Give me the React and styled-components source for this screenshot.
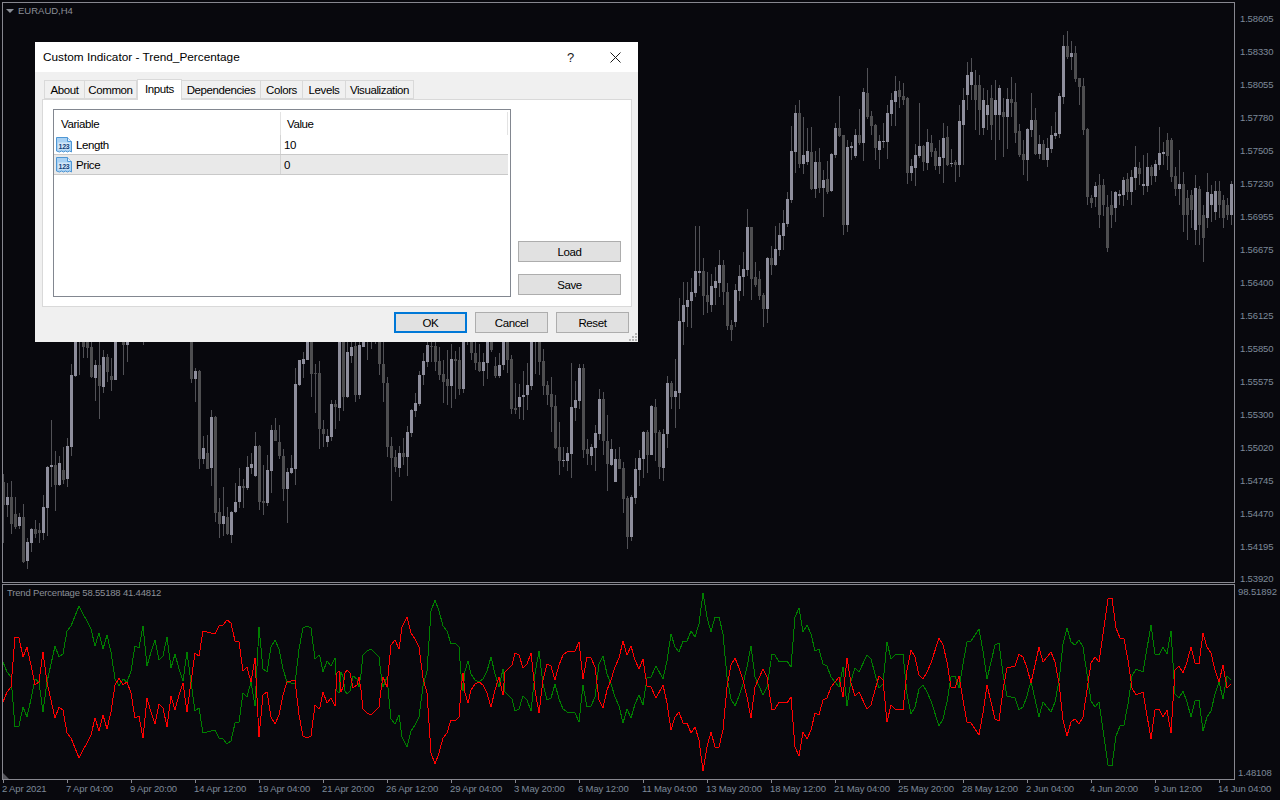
import React from 'react';
import styled, { createGlobalStyle } from 'styled-components';

// -------------------------------------------------------- Chart data (read off 3x crops, so origin + value / 3)
const candleBlocks = [
    { ox: 0, oy: 340, rows: [
        [10,402,425,495,610,0],[22,430,472,495,530,1],[34,422,472,552,582,0],[46,472,522,560,566,0],[58,518,531,558,568,1],
        [70,492,531,666,670,0],[82,595,606,662,686,1],[94,565,567,608,635,1],[106,541,568,582,594,0],[118,549,570,578,608,0],
        [130,465,501,578,600,1],[142,378,381,503,588,1],[154,240,375,381,440,1],[166,333,375,435,513,0],[178,348,369,435,437,1],
        [190,321,390,420,432,0],[202,294,318,417,441,1],[214,72,105,320,348,1],[226,-9,-9,108,110,1],[238,-9,-9,-3,105,0],
        [250,-9,-9,20,55,0],[262,-9,-9,24,55,0],[274,-9,20,110,115,0],[286,60,75,113,182,1],[298,-9,75,137,236,0],
        [310,30,51,140,158,1],[322,42,51,96,125,0],[334,55,108,120,152,0],[346,-9,-9,120,120,1],[370,-9,-9,15,105,0],
        [382,-9,-9,15,65,1],[430,-9,-9,-6,15,0],
        [574,-9,-9,117,130,0],[586,85,93,117,186,1],[598,90,93,357,387,0],[610,289,324,357,372,1],[622,285,339,387,387,0],
        [634,210,231,384,438,1],[646,228,231,519,546,0],[658,474,516,552,594,0],[670,441,528,552,588,1],[682,501,531,582,585,0],
        [694,513,516,585,609,1],[706,430,486,516,520,1],[718,384,438,486,504,1],[730,417,438,444,504,0],[742,348,381,444,450,1],
        [754,339,372,384,402,1],[766,276,318,408,411,1],[778,315,318,486,510,0],[790,375,483,489,525,0],[802,345,390,489,498,1],
        [814,255,270,393,459,1],[826,234,270,303,303,0],[838,255,306,348,357,0],[850,327,348,447,483,0],[862,384,396,447,549,1],
        [874,345,384,399,402,1],[886,84,132,387,435,1],[898,60,60,135,138,1],[910,36,57,72,114,1],[922,-9,-9,60,60,1],
        [934,-9,-9,102,171,0],[946,72,99,102,219,0],[958,63,99,267,327,0],
    ] },
    { ox: 300, oy: 340, rows: [
        [70,240,267,282,320,0],[82,268,288,306,320,1],[94,180,192,291,303,1],[106,180,192,201,267,0],[118,-9,-9,204,243,1],
        [130,-9,-9,171,213,0],[142,-9,36,171,173,1],[154,-9,21,48,69,1],[166,-9,18,165,186,0],[178,-9,15,165,177,1],
        [190,-9,-9,21,21,1],[202,-9,-9,-6,60,0],[214,-9,-9,-6,27,0],[226,-9,-9,-6,12,0],[238,-9,-9,72,105,0],
        [250,-9,72,129,186,0],[262,111,129,321,352,0],[274,292,318,354,483,0],[286,330,351,381,396,0],[298,318,339,384,411,1],
        [310,294,339,351,375,0],[322,258,276,351,408,1],[334,208,210,279,291,1],[346,160,189,213,231,1],[358,93,105,192,198,1],
        [370,39,63,105,135,1],[382,-9,15,66,81,1],[394,-9,18,20,66,0],[406,-9,18,66,93,0],[418,21,63,105,120,0],
        [430,60,102,126,189,0],[442,30,117,138,195,0],[454,12,57,138,204,1],[466,33,57,63,177,0],[478,21,60,147,165,0],
        [490,-9,-9,147,159,1],[502,-9,-9,-6,15,0],[514,-9,-9,39,60,0],[526,-9,39,69,90,0],[538,12,66,93,96,0],
        [550,40,66,93,138,1],[562,-9,-9,69,117,1],[574,-9,-9,30,36,0],[586,51,78,108,114,0],[598,40,75,108,114,1],
        [610,-9,-9,75,90,1],[622,-9,-9,60,100,0],[634,45,57,207,222,0],[646,130,204,210,222,0],[658,132,171,201,237,1],
        [670,93,165,171,240,1],[682,69,135,165,210,1],[694,-9,-9,138,150,1],[706,-9,-9,-6,102,0],[718,-9,-9,66,105,0],
        [730,27,63,138,165,0],[742,123,135,165,195,0],[754,111,162,201,276,0],[766,165,198,324,327,0],[778,246,321,363,405,0],
        [790,321,360,363,381,1],[802,321,339,363,393,1],[814,69,201,342,414,1],[826,123,180,204,243,1],[838,72,84,183,207,1],
        [850,72,84,330,354,0],[862,297,327,342,375,0],[874,312,321,348,375,1],[886,255,279,324,393,1],[898,147,177,282,300,1],
        [910,156,177,303,345,0],[922,225,303,372,453,0],[934,297,327,375,378,1],[946,327,357,426,426,1],[958,321,357,387,387,0],
        [970,366,384,477,519,0],[982,468,474,591,627,0],[994,465,471,591,603,1],[1006,354,387,474,492,1],[1018,330,354,390,438,1],
        [1030,273,276,357,414,1],[1042,270,276,345,399,0],[1054,195,198,345,345,1],[1066,177,201,279,363,0],[1078,270,276,381,417,0],
        [1090,267,282,384,423,1],[1102,108,129,282,324,1],[1114,123,129,171,207,0],[1126,57,153,171,264,1],
    ] },
    { ox: 640, oy: 30, rows: [
        [118,804,873,1089,1137,1],[130,756,825,876,945,1],[142,756,810,831,891,1],[154,744,786,813,894,1],[166,588,723,789,801,1],
        [178,588,723,729,768,1],[190,684,723,798,855,0],[202,726,795,816,849,0],[214,732,768,825,846,1],[226,711,753,774,825,1],
        [238,660,705,759,801,1],[250,690,705,786,825,0],[262,759,786,888,900,0],[274,870,885,900,933,0],[286,762,780,876,891,1],
        [298,705,738,783,813,1],[310,666,717,741,798,1],[322,537,591,720,738,1],[334,591,591,747,810,0],[346,696,741,765,771,0],
        [358,723,747,798,810,0],[370,789,795,837,891,0],[382,681,684,837,879,1],[394,648,684,705,735,0],[406,588,657,705,708,1],
        [418,579,615,660,678,1],[430,540,579,618,660,1],[442,486,507,582,591,1],[454,288,363,510,519,1],[466,225,249,366,429,1],
        [478,210,249,402,414,0],[490,261,375,402,432,1],[502,294,363,396,405,1],[514,291,366,477,480,0],[526,363,396,477,504,1],
        [538,354,396,474,489,0],[550,420,450,474,561,1],[562,393,447,486,492,0],[574,369,372,483,486,1],[586,279,294,375,384,1],
        [598,198,294,318,321,0],[610,315,315,585,615,0],[622,330,351,585,606,1],[634,336,348,354,390,1],[646,297,315,378,384,1],
        [658,237,315,339,345,0],[670,174,186,339,393,1],[682,114,189,261,267,0],[694,243,258,288,315,0],[706,282,285,354,390,0],
        [718,315,333,360,417,1],[730,279,333,336,354,1],[742,225,249,336,387,1],[754,189,210,252,288,1],[766,138,183,216,288,1],
        [778,153,180,201,234,0],[790,159,198,210,225,0],[802,201,204,429,462,0],[814,387,408,429,453,1],[826,342,375,414,468,1],
        [838,219,348,378,384,1],[850,345,348,396,423,0],[862,297,336,399,420,1],[874,315,339,366,381,0],[886,354,363,408,420,0],
        [898,330,381,408,432,1],[910,279,324,384,459,1],[922,288,321,405,408,0],[934,357,399,402,411,1],[946,390,396,405,456,0],
        [958,225,273,405,441,1],
    ] },
    { ox: 1000, oy: 0, rows: [
        [-110,264,300,375,495,1],[-98,186,225,285,330,1],[-86,174,216,255,300,1],[-74,210,255,300,390,0],[-62,225,255,330,405,0],
        [-50,264,300,384,405,1],[-38,270,315,345,390,1],[-26,255,294,375,420,0],[-14,240,300,345,480,1],[-2,255,264,345,420,1],
        [10,295,336,350,470,0],[22,265,297,350,447,1],[34,232,297,309,350,0],[46,250,306,399,430,0],[58,372,393,465,470,0],
        [70,420,462,480,525,0],[82,385,387,480,543,1],[94,279,360,390,411,1],[106,325,360,462,465,0],[118,405,432,462,477,1],
        [130,420,432,480,480,0],[142,415,444,480,500,1],[154,378,405,447,459,1],[166,336,399,408,417,1],[178,280,288,402,414,1],
        [190,105,138,291,312,1],[202,93,138,171,177,0],[214,123,159,171,210,1],[226,138,159,237,246,0],[238,235,235,261,315,0],
        [250,234,258,390,405,0],[262,384,387,591,615,0],[274,585,594,609,624,0],[286,546,558,591,621,1],[298,522,555,645,684,0],
        [310,537,555,615,648,0],[322,585,621,744,756,0],[334,573,615,645,684,0],[346,573,576,624,666,1],[358,570,582,588,615,1],
        [370,531,540,585,618,1],[382,519,537,576,600,0],[394,510,531,576,615,1],[406,438,501,534,570,1],[418,486,504,522,555,0],
        [430,465,552,558,585,1],[442,459,501,558,576,1],[454,495,501,528,555,0],[466,480,492,528,546,1],[478,381,459,495,510,1],
        [490,426,456,462,495,1],[502,399,420,468,510,0],[514,414,420,531,546,0],[526,501,528,567,588,0],[538,450,552,567,615,1],
        [550,516,552,645,696,0],[562,570,594,645,720,0],[574,570,585,630,684,0],[586,525,564,690,735,1],[598,558,567,675,735,0],
        [610,615,645,714,786,0],[622,519,576,654,684,1],[634,555,582,615,666,1],[646,543,573,636,660,1],[658,543,573,615,654,0],
        [670,585,600,654,684,0],[682,594,615,645,660,0],[694,543,552,645,675,1],
    ] },
];

const candles = candleBlocks.flatMap(({ ox, oy, rows }) =>
    rows.map(([zx, wickTop, top, bottom, wickBottom, up]) => ({
        x: Math.floor(ox + zx / 3),
        wickTop: Math.round(oy + wickTop / 3),
        top: Math.round(oy + top / 3),
        bottom: Math.round(oy + bottom / 3),
        wickBottom: Math.round(oy + wickBottom / 3),
        up: up === 1,
    }))
);

const redBlocks = [
    { ox: 0, oy: 575, pts: [10,382,22,350,34,335,46,185,58,190,70,245,82,215,94,270,106,330,118,320,130,232,142,320,154,375,166,430,178,395,190,405,202,475,214,490,226,520,238,548,250,525,262,505,274,480,286,428,298,468,310,420,322,462,334,410,346,330,358,310,370,330,382,322,394,355,406,428,418,422,430,490,442,368,454,410,466,448,478,388,490,400,502,455,514,362,526,405,538,360,550,325,562,410,574,320,586,235,598,242,610,168,622,172,646,178,658,152,670,150,682,136,694,145,706,197,718,200,730,288,742,275,754,320,766,250,778,485,790,360,802,350,814,425,826,448,838,420,850,360,862,322,886,316,898,420,910,482,922,488,934,484,946,390,958,402] },
    { ox: 320, oy: 590, pts: [0,350,10,306,22,340,34,323,46,348,52,250,58,243,64,305,70,290,76,250,82,240,90,250,100,295,110,285,118,262,124,300,130,358,142,368,154,376,166,362,178,352,184,300,190,260,202,290,208,225,214,165,226,150,238,178,246,110,254,92,262,82,274,128,286,148,298,170,310,265,322,310,334,488,346,522,358,490,370,445,382,430,394,390,406,392,418,380,424,300,430,250,436,310,444,340,452,300,464,282,476,275,490,285,502,310,514,350,526,300,536,260,550,315,556,245,568,235,576,225,586,190,598,195,610,235,622,222,634,190,646,300,658,368,670,270,682,222,694,228,706,270,718,225,730,195,742,186,766,183,778,155,790,268,802,200,814,205,826,232,838,330,850,355,862,300,874,270,886,232,898,205,910,152,922,195,934,168,946,210,958,238,970,206,982,288,994,290,1008,325,1030,285,1042,340,1054,420,1066,380,1078,365,1090,400,1102,398,1114,430,1126,410,1138,450,1150,542,1162,470,1174,425,1186,470,1198,470,1210,420,1222,290,1234,225,1246,205,1258,235,1270,270,1282,320,1294,385,1306,290,1318,265,1330,238,1342,260] },
    { ox: 770, oy: 590, pts: [6,360,16,358,28,335,52,338,64,320,76,470,88,498,100,425,112,448,124,420,136,368,148,375,160,330,172,325,184,290,208,260,220,320,232,203,244,280,256,318,268,305,292,358,304,345,316,300,328,258,340,270,352,397,364,345,376,358,400,360,412,240,424,180,436,200,448,255,460,267,472,245,484,220,508,143,520,165,532,215,544,290,556,295,568,258,580,330,592,395,604,398,628,436,640,370,652,285,664,335,676,388,688,392,700,300,712,235,736,228,748,193,760,200,772,235,784,280,808,170,820,215,844,187,856,215,868,280,880,390,892,438,904,395,916,388,928,402,940,380,952,300,964,220,976,200,988,215] },
    { ox: 1080, oy: 560, pts: [72,200,84,118,96,115,108,205,120,235,132,238,144,300,156,385,168,405,190,395,214,538,226,450,238,448,250,470,262,450,274,520,286,330,298,318,310,340,322,305,334,262,346,310,358,312,370,218,382,262,394,280,406,330,418,365,430,314,442,385,452,372] },
];

const MID_LINE = 682;

const redLine = redBlocks.flatMap(({ ox, oy, pts }) => {
    const out = [];
    for (let i = 0; i < pts.length; i += 2) {
        out.push([Math.round(ox + pts[i] / 3), Math.round(oy + pts[i + 1] / 3)]);
    }
    return out;
});

const toPoints = (line) => line.map(([x, y]) => `${x},${y}`).join(' ');
const greenLine = redLine.map(([x, y]) => [x, 2 * MID_LINE - y]);

const priceLabels = ['1.58605', '1.58330', '1.58055', '1.57780', '1.57505', '1.57230', '1.56955', '1.56675', '1.56400', '1.56125', '1.55850', '1.55575', '1.55300', '1.55020', '1.54745', '1.54470', '1.54195', '1.53920'];

const timeLabels = ['2 Apr 2021', '7 Apr 04:00', '9 Apr 20:00', '14 Apr 12:00', '19 Apr 04:00', '21 Apr 20:00', '26 Apr 12:00', '29 Apr 04:00', '3 May 20:00', '6 May 12:00', '11 May 04:00', '13 May 20:00', '18 May 12:00', '21 May 04:00', '25 May 20:00', '28 May 12:00', '2 Jun 04:00', '4 Jun 20:00', '9 Jun 12:00', '14 Jun 04:00'];

const tabs = [
    { name: 'About', width: 41 },
    { name: 'Common', width: 52 },
    { name: 'Inputs', width: 45, active: true },
    { name: 'Dependencies', width: 79 },
    { name: 'Colors', width: 42 },
    { name: 'Levels', width: 43 },
    { name: 'Visualization', width: 68 },
];

const inputs = [
    { name: 'Length', value: '10' },
    { name: 'Price', value: '0', selected: true },
];

// -------------------------------------------------------- Small drawings
const NumberIcon = () => (
    <svg width="17" height="16" viewBox="0 0 17 16">
        <path d="M0.5 0.5H11.5L15.5 4.5V15L13.5 14L11.5 15L9.5 14L7.5 15L5.5 14L3.5 15L0.5 14Z" fill="#a9d1f3" stroke="#4f97d4" />
        <path d="M11.5 0.5V4.5H15.5" fill="#e4f0fb" stroke="#4f97d4" />
        <rect x="2" y="5.5" width="12" height="7" fill="#d3e7f8" />
        <text x="8" y="11.5" textAnchor="middle" fontFamily="Liberation Sans, sans-serif" fontSize="7" fontWeight="700" letterSpacing="-0.2" fill="#123f78">123</text>
    </svg>
);

const CloseIcon = () => (
    <svg width="11" height="11" viewBox="0 0 11 11">
        <path d="M0.5 0.5L10.5 10.5M10.5 0.5L0.5 10.5" stroke="#1a1a1a" strokeWidth="1" fill="none" />
    </svg>
);

const GripIcon = () => (
    <svg width="8" height="8" viewBox="0 0 8 8">
        <g fill="#b4b4b4">
            <rect x="6" y="0" width="2" height="2" />
            <rect x="3" y="3" width="2" height="2" />
            <rect x="6" y="3" width="2" height="2" />
            <rect x="0" y="6" width="2" height="2" />
            <rect x="3" y="6" width="2" height="2" />
            <rect x="6" y="6" width="2" height="2" />
        </g>
    </svg>
);

const App = () => {
    return (
        <Terminal>
            <GlobalStyle />

            <PaneRow>
                <MainPane>
                    <PaneCaption>
                        <CaptionArrow />
                        EURAUD,H4
                    </PaneCaption>
                    <svg width="1231" height="579" viewBox="3 3 1231 579" shapeRendering="crispEdges">
                        {candles.map((c, i) => (
                            <g key={i}>
                                <rect x={c.x} y={c.wickTop} width="1" height={Math.max(c.wickBottom - c.wickTop, 1)} fill="#515156" />
                                <rect x={c.x - 1} y={c.top} width="3" height={Math.max(c.bottom - c.top, 1)} fill={c.up ? '#8e8e9c' : '#4e4e50'} />
                            </g>
                        ))}
                    </svg>
                </MainPane>
                <PriceAxis>
                    {priceLabels.map((label) => (
                        <PriceLabel key={label}>{label}</PriceLabel>
                    ))}
                </PriceAxis>
            </PaneRow>

            <IndicatorRow>
                <IndicatorPane>
                    <IndicatorCaption>Trend Percentage 58.55188 41.44812</IndicatorCaption>
                    <svg width="1231" height="194" viewBox="3 585 1231 194" shapeRendering="crispEdges">
                        <polyline points={toPoints(greenLine)} fill="none" stroke="#008000" strokeWidth="1" />
                        <polyline points={toPoints(redLine)} fill="none" stroke="#ff0000" strokeWidth="1" />
                    </svg>
                    <CornerMark />
                </IndicatorPane>
                <IndicatorScale>
                    <ScaleLabel>98.51892</ScaleLabel>
                    <ScaleLabel>1.48108</ScaleLabel>
                </IndicatorScale>
            </IndicatorRow>

            <TimeAxis>
                {timeLabels.map((label) => (
                    <TimeLabel key={label}>{label}</TimeLabel>
                ))}
            </TimeAxis>

            <Dialog>
                <TitleBar>
                    <DialogTitle>Custom Indicator - Trend_Percentage</DialogTitle>
                    <TitleButton>?</TitleButton>
                    <TitleButton><CloseIcon /></TitleButton>
                </TitleBar>

                <TabStrip>
                    {tabs.map((tab) => (
                        <Tab key={tab.name} $width={tab.width} $active={tab.active}>{tab.name}</Tab>
                    ))}
                </TabStrip>

                <TabPanel>
                    <InputList>
                        <ListHeader>
                            <HeaderCell>Variable</HeaderCell>
                            <HeaderCell>Value</HeaderCell>
                        </ListHeader>
                        {inputs.map((input) => (
                            <ListRow key={input.name} $selected={input.selected}>
                                <NameCell>
                                    <NumberIcon />
                                    {input.name}
                                </NameCell>
                                <ValueCell>{input.value}</ValueCell>
                            </ListRow>
                        ))}
                    </InputList>
                    <SideButtons>
                        <DialogButton $wide>Load</DialogButton>
                        <DialogButton $wide>Save</DialogButton>
                    </SideButtons>
                </TabPanel>

                <DialogFooter>
                    <DialogButton $primary>OK</DialogButton>
                    <DialogButton>Cancel</DialogButton>
                    <DialogButton>Reset</DialogButton>
                </DialogFooter>

                <Grip><GripIcon /></Grip>
            </Dialog>
        </Terminal>
    );
};

const GlobalStyle = createGlobalStyle`
    html, body {
        margin: 0;
        padding: 0;
        background: #08080d;
        overflow: hidden;
    }
`;

const Terminal = styled.div`
    position: relative;
    width: 1280px;
    height: 800px;
    overflow: hidden;
    padding: 2px 0 0 2px;
    box-sizing: border-box;
    display: flex;
    flex-direction: column;
    background: #08080d;
    font-family: "Liberation Sans", Arial, sans-serif;
`;

const PaneRow = styled.div`
    display: flex;
    height: 581px;
    flex-shrink: 0;
`;

const MainPane = styled.div`
    position: relative;
    box-sizing: border-box;
    width: 1233px;
    height: 581px;
    border: 1px solid #87878f;

    svg {
        display: block;
    }
`;

const PaneCaption = styled.div`
    position: absolute;
    left: 3px;
    top: 2px;
    display: flex;
    align-items: center;
    gap: 4px;
    z-index: 1;
    font-size: 9.5px;
    line-height: 12px;
    color: #8b8f98;
`;

const CaptionArrow = styled.span`
    width: 0;
    height: 0;
    border-left: 4px solid transparent;
    border-right: 4px solid transparent;
    border-top: 4px solid #8b8f98;
`;

const PriceAxis = styled.div`
    display: flex;
    flex-direction: column;
    gap: 20.97px;
    padding: 11px 0 0 5px;
    height: 581px;
    box-sizing: border-box;
`;

const PriceLabel = styled.div`
    font-size: 9.5px;
    letter-spacing: -0.15px;
    line-height: 12px;
    height: 12px;
    flex-shrink: 0;
    color: #7d8899;
`;

const IndicatorRow = styled.div`
    display: flex;
    height: 196px;
    margin-top: 1px;
    flex-shrink: 0;
`;

const IndicatorPane = styled.div`
    position: relative;
    box-sizing: border-box;
    width: 1233px;
    height: 196px;
    border: 1px solid #87878f;

    svg {
        display: block;
    }
`;

const IndicatorCaption = styled.div`
    position: absolute;
    left: 4px;
    top: 2px;
    font-size: 9.5px;
    letter-spacing: -0.18px;
    line-height: 12px;
    color: #8b8f98;
`;

const CornerMark = styled.span`
    position: absolute;
    left: 0;
    bottom: 0;
    width: 6px;
    height: 6px;
    background: #55555c;
    clip-path: polygon(0 0, 0 100%, 100% 100%);
`;

const IndicatorScale = styled.div`
    display: flex;
    flex-direction: column;
    justify-content: space-between;
    box-sizing: border-box;
    height: 196px;
    padding: 2px 0 1px 3px;
`;

const ScaleLabel = styled.div`
    font-size: 9.5px;
    letter-spacing: -0.1px;
    line-height: 12px;
    color: #7d8899;
`;

const TimeAxis = styled.div`
    display: grid;
    grid-template-columns: repeat(20, 64px);
    flex-shrink: 0;
`;

const TimeLabel = styled.div`
    position: relative;
    padding-top: 3px;
    font-size: 9.5px;
    letter-spacing: -0.15px;
    line-height: 12px;
    white-space: nowrap;
    color: #7d8899;

    &::before {
        content: '';
        position: absolute;
        left: 1px;
        top: 0;
        width: 1px;
        height: 3px;
        background: #87878f;
    }
`;

const Dialog = styled.div`
    position: absolute;
    left: 35px;
    top: 42px;
    width: 603px;
    height: 300px;
    display: flex;
    flex-direction: column;
    background: #f0f0f0;
    color: #000;
    font-size: 11.5px;
    letter-spacing: -0.4px;
`;

const TitleBar = styled.div`
    display: flex;
    align-items: center;
    flex-shrink: 0;
    height: 30px;
    padding-left: 8px;
    background: #fff;
`;

const DialogTitle = styled.div`
    flex: 1;
    font-size: 11.8px;
    letter-spacing: 0;
`;

const TitleButton = styled.div`
    display: flex;
    align-items: center;
    justify-content: center;
    width: 45px;
    height: 30px;
    font-size: 13px;
    color: #1a1a1a;
`;

const TabStrip = styled.div`
    display: flex;
    align-items: flex-end;
    height: 21px;
    margin: 7px 0 -1px 9px;
    position: relative;
    z-index: 1;
`;

const Tab = styled.div`
    box-sizing: border-box;
    width: ${props => props.$width}px;
    height: ${props => props.$active ? 21 : 19}px;
    margin-bottom: ${props => props.$active ? 0 : 1}px;
    padding-bottom: ${props => props.$active ? 2 : 0}px;
    display: flex;
    align-items: center;
    justify-content: center;
    border: 1px solid #d9d9d9;
    border-bottom: ${props => props.$active ? 'none' : '1px solid #d9d9d9'};
    border-left: ${props => props.$active ? '1px solid #d9d9d9' : 'none'};
    background: ${props => props.$active ? '#fff' : '#f0f0f0'};
    white-space: nowrap;

    &:first-child {
        border-left: 1px solid #d9d9d9;
    }
`;

const TabPanel = styled.div`
    box-sizing: border-box;
    display: flex;
    gap: 7px;
    height: 208px;
    margin: 0 6px 0 7px;
    padding: 9px 10px 9px 10px;
    border: 1px solid #d9d9d9;
    background: #fff;
`;

const InputList = styled.div`
    box-sizing: border-box;
    width: 458px;
    padding-right: 2px;
    border: 1px solid #828790;
    background: #fff;
`;

const ListHeader = styled.div`
    display: grid;
    grid-template-columns: 227px 1fr;
    height: 25px;
`;

const HeaderCell = styled.div`
    display: flex;
    align-items: center;
    padding-left: 7px;
    margin-top: 2px;
    height: 23px;
    border-right: 1px solid #e3e3e3;

    &:last-child {
        padding-left: 6px;
    }
`;

const ListRow = styled.div`
    box-sizing: border-box;
    display: grid;
    grid-template-columns: 227px 1fr;
    height: 20px;
    border-bottom: 1px solid #c9c9c9;
    background: ${props => props.$selected ? '#e9e9e9' : '#fff'};
`;

const NameCell = styled.div`
    display: flex;
    align-items: center;
    gap: 3px;
    padding-left: 2px;
    border-right: 1px solid #d4d4d4;
`;

const ValueCell = styled.div`
    display: flex;
    align-items: center;
    padding-left: 3px;
`;

const SideButtons = styled.div`
    display: flex;
    flex-direction: column;
    justify-content: flex-end;
    gap: 12px;
    padding-bottom: 2px;
`;

const DialogButton = styled.div`
    box-sizing: border-box;
    display: flex;
    align-items: center;
    justify-content: center;
    width: ${props => props.$wide ? 103 : 73}px;
    height: 21px;
    background: #e1e1e1;
    border: ${props => props.$primary ? '2px solid #0078d7' : '1px solid #adadad'};
`;

const DialogFooter = styled.div`
    display: flex;
    justify-content: flex-end;
    gap: 8px;
    padding: 5px 9px 0 0;
`;

const Grip = styled.div`
    position: absolute;
    right: 1px;
    bottom: 1px;
    line-height: 0;
`;

export default App;
